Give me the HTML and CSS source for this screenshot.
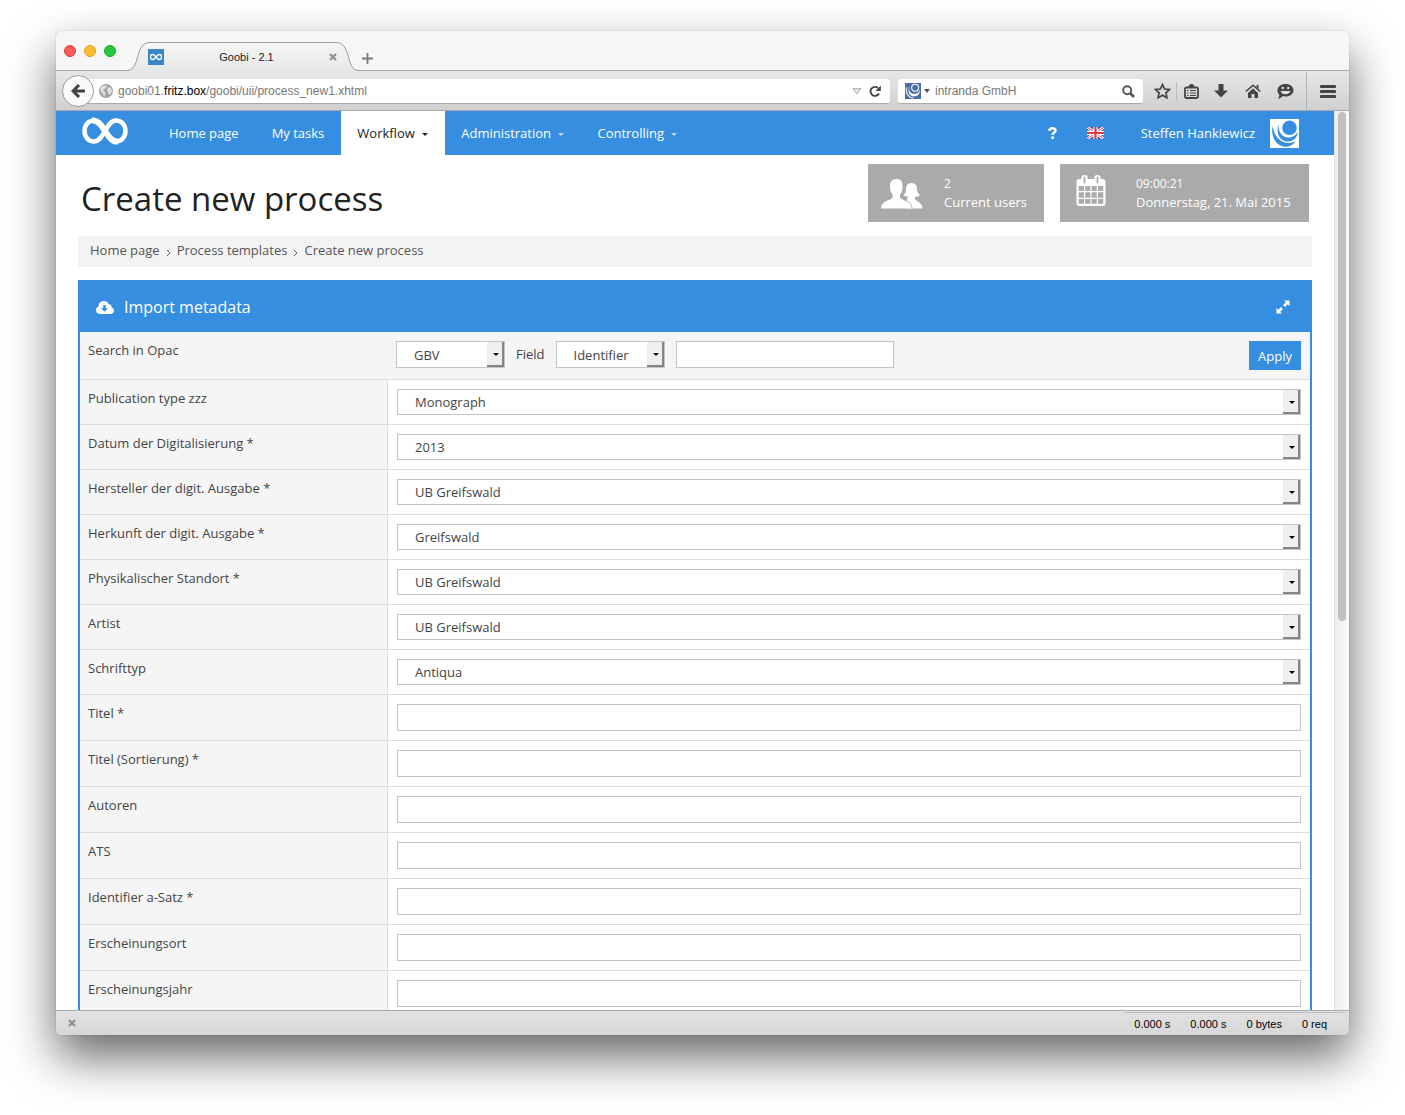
FILE: index.html
```
<!doctype html>
<html lang="en">
<head>
  <meta charset="UTF-8">
  <meta name="viewport" content="width=device-width, initial-scale=1.0">
  <title>Goobi - 2.1</title>
  <link rel="stylesheet" href="styles.css">
</head>
<body>
<div class="window">

  <!-- tabs -->
  <div class="tabstrip">
    <div class="lights">
      <span class="light red"></span>
      <span class="light yellow"></span>
      <span class="light green"></span>
    </div>
    <div class="tab">
      <svg class="tab-shape" width="232" height="30" viewBox="0 0 232 30">
        <defs>
          <linearGradient id="tabfill" x1="0" y1="0" x2="0" y2="1">
            <stop offset="0" stop-color="#f6f6f6"/>
            <stop offset="1" stop-color="#e7e7e7"/>
          </linearGradient>
        </defs>
        <path d="M0 28.500C14 28.500 7 .500 23 .500H209C225 .500 218 28.500 232 28.500V30H0Z" fill="url(#tabfill)"/>
        <path d="M0 28.500C14 28.500 7 .500 23 .500H209C225 .500 218 28.500 232 28.500" fill="none" stroke="#9a9a9a"/>
      </svg>
      <svg class="favicon" width="16" height="16" viewBox="0 0 16 16">
        <rect width="16" height="16" fill="#3a87cc"/>
        <path d="M2.500 8C2.500 6.500 3.500 5.500 4.800 5.500C7.500 5.500 8.500 10.500 11.200 10.500C12.500 10.500 13.500 9.500 13.500 8C13.500 6.500 12.500 5.500 11.200 5.500C8.500 5.500 7.500 10.500 4.800 10.500C3.500 10.500 2.500 9.500 2.500 8Z" fill="none" stroke="#fff" stroke-width="1.300"/>
      </svg>
      <span class="tab-title">Goobi - 2.1</span>
      <button class="close" aria-label="Close tab">
        <svg width="8" height="8" viewBox="0 0 8 8"><path d="M1 1L7 7M7 1L1 7" stroke="#8f8f8f" stroke-width="2.200"/></svg>
      </button>
    </div>
    <button class="newtab" aria-label="New tab">
      <svg width="11" height="11" viewBox="0 0 11 11"><path d="M5.500 0V11M0 5.500H11" stroke="#7b7b7b" stroke-width="1.800"/></svg>
    </button>
  </div>

  <!-- toolbar -->
  <div class="toolbar">
    <button class="back" aria-label="Back">
      <svg width="15" height="14" viewBox="0 0 15 14"><path d="M8 1L2.200 7L8 13M3 7H14" fill="none" stroke="#444" stroke-width="3.200"/></svg>
    </button>
    <div class="urlbar">
      <svg width="14" height="14" viewBox="0 0 14 14">
        <circle cx="7" cy="7" r="7" fill="#a3a3a3"/>
        <path d="M2 3L5 1.500L8 2L7 4L5 5L4 7L6 8L6.500 10L5 12.500L3.500 9L1.500 7ZM9.500 3L12 4L13 7L11.500 10L10 11L9 8L8 6Z" fill="#e3e3e3"/>
      </svg>
      <span class="url">goobi01.<b>fritz.box</b>/goobi/uii/process_new1.xhtml</span>
      <svg width="10" height="7" viewBox="0 0 10 7"><path d="M1 .700H9L5 6Z" fill="#e8e8e8" stroke="#a9a9a9"/></svg>
      <button class="reload" aria-label="Reload">
        <svg width="12" height="12" viewBox="0 0 12 12"><path d="M10 8.500A4.500 4.500 0 1 1 9 3" fill="none" stroke="#444" stroke-width="1.900"/><path d="M11.800 .500V6H6.500Z" fill="#444"/></svg>
      </button>
    </div>
    <div class="searchbar">
      <svg width="16" height="16" viewBox="0 0 30 30">
        <rect width="30" height="30" fill="#4a6fa5"/>
        <circle cx="19" cy="9" r="6.500" fill="none" stroke="#fff" stroke-width="2"/>
        <path d="M9 4C5 14 11 22 20 20C24 19 27 16 28 12C28 22 22 25 17 25C7 25 4 13 9 4Z" fill="#fff"/>
        <path d="M3 8C0 20 8 28 16 28" fill="none" stroke="#fff" stroke-width="2"/>
      </svg>
      <svg width="6" height="4" viewBox="0 0 6 4"><path d="M0 0H6L3 4Z" fill="#555"/></svg>
      <input type="text" placeholder="intranda GmbH" aria-label="Search">
      <svg width="13" height="13" viewBox="0 0 13 13"><circle cx="5.200" cy="5.200" r="4" fill="none" stroke="#555" stroke-width="1.900"/><path d="M8 8L12 12" stroke="#555" stroke-width="2.600"/></svg>
    </div>
    <div class="tools">
      <button class="narrow" aria-label="Bookmark">
        <svg width="17" height="16" viewBox="0 0 17 16"><path d="M8.500 1.500L10.600 6L15.500 6.500L11.900 9.800L12.900 14.700L8.500 12.200L4.100 14.700L5.100 9.800L1.500 6.500L6.400 6Z" fill="none" stroke="#444" stroke-width="1.700"/></svg>
      </button>
      <span class="sep short"></span>
      <button class="narrow" aria-label="Bookmarks menu">
        <svg width="15" height="15" viewBox="0 0 15 15"><rect x="1" y="3.500" width="13" height="10.500" rx="1.500" fill="none" stroke="#444" stroke-width="1.800"/><path d="M4.500 3.500C4.500 1 6 0 7.500 0S10.500 1 10.500 3.500Z" fill="#444"/><path d="M3 6.500H4.500M6 6.500H12M3 9H4.500M6 9H12M3 11.500H4.500M6 11.500H12" stroke="#444" stroke-width="1.200"/></svg>
      </button>
      <button aria-label="Downloads">
        <svg width="14" height="14" viewBox="0 0 14 14"><path d="M4.500 0H9.500V6.500H14L7 13.500L0 6.500H4.500Z" fill="#444"/></svg>
      </button>
      <button aria-label="Home">
        <svg width="16" height="14" viewBox="0 0 16 14"><path d="M.800 7.500L8 1.200L15.200 7.500" fill="none" stroke="#444" stroke-width="1.600"/><path d="M11.500 1H13.500V5L11.500 3.500ZM3 9L8 4.500L13 9V14H9.500V10H6.500V14H3Z" fill="#444"/></svg>
      </button>
      <button aria-label="Chat">
        <svg width="17" height="15" viewBox="0 0 17 15"><path d="M8.500 0C13 0 16.500 2.600 16.500 6.200S13 12.500 8.500 12.500C7.500 12.500 6.500 12.300 5.700 12C4.500 13.500 3 14.500 1 14.700C2 13.500 2.300 12 2.200 10.500C1 9.500 .500 8 .500 6.200C.500 2.600 4 0 8.500 0Z" fill="#444"/><circle cx="5.800" cy="4" r="1.200" fill="#ddd"/><circle cx="11.200" cy="4" r="1.200" fill="#ddd"/><path d="M3.500 7H13.500C12.500 9.300 11 10.200 8.500 10.200S4.500 9.300 3.500 7Z" fill="#ddd"/></svg>
      </button>
      <span class="sep"></span>
      <button aria-label="Menu">
        <svg width="16" height="13" viewBox="0 0 16 13"><path d="M1 1.500H15M1 6.500H15M1 11.500H15" stroke="#444" stroke-width="2.800" stroke-linecap="round"/></svg>
      </button>
    </div>
  </div>

  <!-- page -->
  <div class="viewport">
    <div class="page">
      <nav class="navbar">
        <a class="brand" href="#" aria-label="Goobi">
          <svg width="48" height="28" viewBox="0 0 48 28"><path d="M3.500 14C3.500 8 7.500 3.500 13 3.500C23 3.500 25 24.500 35 24.500C40.500 24.500 44.500 20 44.500 14C44.500 8 40.500 3.500 35 3.500C25 3.500 23 24.500 13 24.500C7.500 24.500 3.500 20 3.500 14Z" fill="none" stroke="#fff" stroke-width="4.500"/><path d="M11 3.500C23 2.500 25 25.500 37 24.500" fill="none" stroke="#fff" stroke-width="6"/></svg>
        </a>
        <a class="item" href="#">Home page</a>
        <a class="item" href="#">My tasks</a>
        <a class="item active" href="#">Workflow <span class="caret"></span></a>
        <a class="item" href="#">Administration <span class="caret"></span></a>
        <a class="item" href="#">Controlling <span class="caret"></span></a>
        <div class="nav-right">
          <a class="help" href="#" aria-label="Help">
            <svg width="9" height="12" viewBox="0 0 9 12"><path d="M1.200 3.800C1.400 2 2.600 1.200 4.400 1.200C6.400 1.200 7.600 2.200 7.600 3.600C7.600 5.600 4.600 5.600 4.600 8" fill="none" stroke="#fff" stroke-width="2.400"/><rect x="3.300" y="9.400" width="2.600" height="2.600" fill="#fff"/></svg>
          </a>
          <a class="lang" href="#" aria-label="English">
            <svg width="17" height="12" viewBox="0 0 17 12">
              <rect width="17" height="12" fill="#2f4a9c"/>
              <path d="M0 0L17 12M17 0L0 12" stroke="#fff" stroke-width="3"/>
              <path d="M0 0L17 12M17 0L0 12" stroke="#d8414f" stroke-width="1"/>
              <path d="M8.500 0V12M0 6H17" stroke="#fff" stroke-width="4.500"/>
              <path d="M8.500 0V12M0 6H17" stroke="#e03a48" stroke-width="2.200"/>
            </svg>
          </a>
          <a class="user" href="#">Steffen Hankiewicz</a>
          <svg width="29" height="29" viewBox="0 0 29 29">
            <rect width="29" height="29" fill="#fff"/>
            <circle cx="19.500" cy="8.800" r="7.300" fill="#368ee0"/>
            <path d="M9 5C7.500 12.500 12 18.500 18.500 18.500C23 18.500 26.500 16 27.800 12C28 19 22.500 23 17 22.500C9 22 5.500 12.500 9 5Z" fill="#368ee0"/>
            <path d="M2.500 7C.500 17 6 27 14.500 27.800C19 28 23.500 26 25.500 22C18 26.500 5.500 24 2.500 7Z" fill="#368ee0"/>
          </svg>
        </div>
      </nav>

      <header class="page-header">
        <h1>Create new process</h1>
        <div class="stat">
          <svg width="42" height="30" viewBox="0 0 42 30">
            <path d="M30.500 4C34.500 4 36 7 36 10C36 13 37 14.500 39 16C37.500 17.500 36 17.700 34 17.800V20.500C36.500 23 41.500 23.500 41.500 29.500H26V20.500L27 17.800C25 17.700 23.500 17 22.500 16C24.500 14.500 25 13 25 10C25 7 26.500 4 30.500 4Z" fill="#fff"/>
            <path d="M15.500 0C20 0 22 3 21.500 8C21.500 12 20 14 19 15.500V19C23 21.500 31 22.500 31 29.500H0C0 22.500 8 21.500 11.500 19V15.500C10.500 14 9 12 9 8C8.500 3 11 0 15.500 0Z" fill="#fff"/>
            <path d="M22 20.500C26 22 31 23.500 31 29.500" fill="none" stroke="#aaa" stroke-width=".900"/>
          </svg>
          <div class="stat-text">
            <span>2</span>
            <span class="desc">Current users</span>
          </div>
        </div>
        <div class="stat date">
          <svg width="30" height="32" viewBox="0 0 30 32">
            <path d="M3.500 4H26.500Q29.500 4 29.500 7V28Q29.500 31 26.500 31H3.500Q.500 31 .500 28V7Q.500 4 3.500 4Z" fill="#fff"/>
            <path d="M2.700 11H8V16H2.700ZM9.200 11H14.400V16H9.200ZM15.600 11H20.800V16H15.600ZM22 11H27.300V16H22ZM2.700 17.300H8V22.700H2.700ZM9.200 17.300H14.400V22.700H9.200ZM15.600 17.300H20.800V22.700H15.600ZM22 17.300H27.300V22.700H22ZM2.700 24H8V28.800H2.700ZM9.200 24H14.400V28.800H9.200ZM15.600 24H20.800V28.800H15.600ZM22 24H27.300V28.800H22Z" fill="#aaa"/>
            <path d="M8.500 3.200V6.800M21.500 3.200V6.800" stroke="#fff" stroke-width="6.400" stroke-linecap="round"/>
            <path d="M8.500 2.500V7.500M21.500 2.500V7.500" stroke="#aaa" stroke-width="1.800" stroke-linecap="round"/>
          </svg>
          <div class="stat-text">
            <span>09:00:21</span>
            <span class="desc">Donnerstag, 21. Mai 2015</span>
          </div>
        </div>
      </header>

      <div class="breadcrumbs">
        <a href="#">Home page</a>
        <svg width="5" height="8" viewBox="0 0 5 8"><path d="M1 1L4 4L1 7" fill="none" stroke="#666"/></svg>
        <a href="#">Process templates</a>
        <svg width="5" height="8" viewBox="0 0 5 8"><path d="M1 1L4 4L1 7" fill="none" stroke="#666"/></svg>
        <a href="#">Create new process</a>
      </div>

      <section class="box">
        <div class="box-title">
          <svg width="18" height="13" viewBox="0 0 18 13"><path d="M4 13C1.700 13 0 11.400 0 9.200C0 7.500 1 6.200 2.500 5.600C2.400 2.500 4.700 0 7.800 0C10 0 11.800 1.200 12.600 3.200C14.500 2.800 16 4.400 15.400 6.200C17 6.600 18 7.900 18 9.500C18 11.500 16.500 13 14.500 13Z" fill="#fff"/><path d="M7.300 4H9.700V7H12L8.500 10.800L5 7H7.300Z" fill="#368ee0"/></svg>
          <h3>Import metadata</h3>
          <button class="expand" aria-label="Expand">
            <svg width="14" height="14" viewBox="0 0 14 14"><path d="M8 .500H13.500V6L11.700 4.200L9 6.900L7.100 5L9.800 2.300ZM.500 8L2.300 9.800L5 7.100L6.900 9L4.200 11.700L6 13.500H.500Z" fill="#fff"/></svg>
          </button>
        </div>
        <table class="form">
          <tr class="search">
            <th><label for="catalogue">Search in Opac</label></th>
            <td>
              <div class="opac">
                <span class="select"><select id="catalogue"><option>GBV</option></select></span>
                <label for="field">Field</label>
                <span class="select"><select id="field"><option>Identifier</option></select></span>
                <input type="text" aria-label="Search term">
                <button class="apply">Apply</button>
              </div>
            </td>
          </tr>
          <tr>
            <th><label for="f1">Publication type zzz</label></th>
            <td><span class="select"><select id="f1"><option>Monograph</option></select></span></td>
          </tr>
          <tr>
            <th><label for="f2">Datum der Digitalisierung *</label></th>
            <td><span class="select"><select id="f2"><option>2013</option></select></span></td>
          </tr>
          <tr>
            <th><label for="f3">Hersteller der digit. Ausgabe *</label></th>
            <td><span class="select"><select id="f3"><option>UB Greifswald</option></select></span></td>
          </tr>
          <tr>
            <th><label for="f4">Herkunft der digit. Ausgabe *</label></th>
            <td><span class="select"><select id="f4"><option>Greifswald</option></select></span></td>
          </tr>
          <tr>
            <th><label for="f5">Physikalischer Standort *</label></th>
            <td><span class="select"><select id="f5"><option>UB Greifswald</option></select></span></td>
          </tr>
          <tr>
            <th><label for="f6">Artist</label></th>
            <td><span class="select"><select id="f6"><option>UB Greifswald</option></select></span></td>
          </tr>
          <tr>
            <th><label for="f7">Schrifttyp</label></th>
            <td><span class="select"><select id="f7"><option>Antiqua</option></select></span></td>
          </tr>
          <tr>
            <th><label for="f8">Titel *</label></th>
            <td><input type="text" id="f8"></td>
          </tr>
          <tr>
            <th><label for="f9">Titel (Sortierung) *</label></th>
            <td><input type="text" id="f9"></td>
          </tr>
          <tr>
            <th><label for="f10">Autoren</label></th>
            <td><input type="text" id="f10"></td>
          </tr>
          <tr>
            <th><label for="f11">ATS</label></th>
            <td><input type="text" id="f11"></td>
          </tr>
          <tr>
            <th><label for="f12">Identifier a-Satz *</label></th>
            <td><input type="text" id="f12"></td>
          </tr>
          <tr>
            <th><label for="f13">Erscheinungsort</label></th>
            <td><input type="text" id="f13"></td>
          </tr>
          <tr>
            <th><label for="f14">Erscheinungsjahr</label></th>
            <td><input type="text" id="f14"></td>
          </tr>
        </table>
      </section>
    </div>
    <div class="scrollbar"><div class="thumb"></div></div>
  </div>

  <!-- status bar -->
  <div class="statusbar">
    <button class="close" aria-label="Close add-on bar">
      <svg width="8" height="8" viewBox="0 0 8 8"><path d="M1 1L7 7M7 1L1 7" stroke="#8f8f8f" stroke-width="2.200"/></svg>
    </button>
    <div class="timings">
      <span>0.000 s</span>
      <span>0.000 s</span>
      <span>0 bytes</span>
      <span>0 req</span>
    </div>
  </div>
</div>
</body>
</html>
```

FILE: styles.css
```
* {
    box-sizing: border-box;
}
body {
    margin: 0;
    padding: 31px 56px 80px;
    height: 100vh;
    background: #fff;
    font-family: "Open Sans", sans-serif;
    font-size: 13px;
    line-height: 20px;
    color: #444;
    overflow: hidden;
}
a {
    color: inherit;
    text-decoration: none;
}
button {
    display: flex;
    align-items: center;
    justify-content: center;
    padding: 0;
    border: 0;
    background: none;
    font-family: inherit;
    cursor: pointer;
}
svg {
    display: block;
    flex: none;
}

/* browser window */
.window {
    display: flex;
    flex-direction: column;
    height: 100%;
    border-radius: 5px;
    overflow: hidden;
    background: #fff;
    box-shadow: 0 0 1px rgba(0, 0, 0, 0.5), 0 22px 48px rgba(0, 0, 0, 0.6);
}
.tabstrip {
    display: flex;
    flex: none;
    height: 40px;
    background: #f6f6f6;
    border-bottom: 1px solid #a9a9a9;
    font-family: "Liberation Sans", sans-serif;
    font-size: 11px;
    color: #222;
}
.lights {
    display: flex;
    gap: 8px;
    padding: 14px 11px 0 8px;
}
.light {
    width: 12px;
    height: 12px;
    border-radius: 50%;
}
.red {
    background: #fc5b57;
    border: 1px solid #df3d38;
}
.yellow {
    background: #fdbd2f;
    border: 1px solid #de9f27;
}
.green {
    background: #27c83f;
    border: 1px solid #18aa29;
}
.tab {
    position: relative;
    display: flex;
    align-items: center;
    width: 232px;
    height: 30px;
    margin-top: 11px;
    padding: 0 22px 0 21px;
}
.tab-shape {
    position: absolute;
    top: 0;
    left: 0;
}
.favicon,
.tab-title,
.tab .close {
    position: relative;
}
.tab-title {
    flex: 1;
    text-align: center;
}
.newtab {
    width: 16px;
    height: 20px;
    margin-top: 17px;
}
.toolbar {
    display: flex;
    flex: none;
    align-items: center;
    height: 40px;
    padding: 1px 5px 0 6px;
    background: linear-gradient(#e7e7e7, #d0d0d0);
    border-bottom: 1px solid #a9a9a9;
    font-family: "Liberation Sans", sans-serif;
    font-size: 12px;
}
.back {
    z-index: 1;
    width: 32px;
    height: 32px;
    border: 1px solid #9c9c9c;
    border-radius: 50%;
    background: #fafafa;
}
.urlbar {
    display: flex;
    flex: 1;
    align-items: center;
    gap: 5px;
    height: 25px;
    margin: 0 8px 0 -7px;
    padding: 1px 7px 0 12px;
    background: #fff;
    border-bottom: 1px solid #aaa;
    border-radius: 0 3px 3px 0;
}
.url {
    flex: 1;
    color: #777;
}
.url b {
    font-weight: normal;
    color: #000;
}
.reload {
    width: 16px;
    height: 16px;
}
.searchbar {
    display: flex;
    align-items: center;
    gap: 3px;
    width: 245px;
    height: 25px;
    padding: 1px 8px 0 7px;
    background: #fff;
    border-bottom: 1px solid #aaa;
    border-radius: 3px;
}
.searchbar input {
    flex: 1;
    min-width: 0;
    padding: 0 2px;
    border: 0;
    outline: 0;
    font: inherit;
}
.searchbar input::placeholder {
    color: #777;
}
.tools {
    display: flex;
    align-items: center;
    padding-left: 5px;
}
.tools button {
    width: 32px;
    height: 28px;
}
.tools .narrow {
    width: 28px;
}
.sep {
    width: 1px;
    height: 38px;
    margin: 0 5px;
    background: #aab4bd;
}
.sep.short {
    height: 18px;
    margin: 0;
    background: #bbb;
}

/* page */
.viewport {
    display: flex;
    flex: 1;
    min-height: 0;
}
.page {
    flex: 1;
    min-width: 0;
    overflow: hidden;
}
.scrollbar {
    width: 15px;
    padding: 1px 3px 0 3px;
    background: linear-gradient(90deg, #ededed, #fafafa);
    border-left: 1px solid #e0e0e0;
}
.thumb {
    height: 509px;
    max-height: 57%;
    border-radius: 4px;
    background: #c1c1c1;
}
.navbar {
    display: flex;
    height: 44px;
    background: #368ee0;
    color: #fff;
}
.brand {
    padding: 6px 24px 0 25px;
}
.item {
    padding: 12px 17px 12px 16px;
}
.item.active {
    background: #fff;
    color: #222;
}
.caret {
    display: inline-block;
    margin-left: 4px;
    border-top: 3px solid #c4d4e4;
    border-left: 3px solid transparent;
    border-right: 3px solid transparent;
    vertical-align: middle;
}
.active .caret {
    border-top-color: #222;
}
.nav-right {
    display: flex;
    align-items: center;
    margin-left: auto;
    padding-right: 35px;
}
.lang {
    margin: 0 37px 0 30px;
}
.user {
    margin-right: 15px;
}
.page-header {
    display: flex;
    gap: 16px;
    padding: 9px 25px 14px;
}
h1 {
    flex: 1;
    margin: 0;
    padding-top: 12px;
    font-size: 33px;
    line-height: 46px;
    font-weight: normal;
    color: #222;
}
.stat {
    display: flex;
    gap: 21px;
    min-width: 176px;
    height: 58px;
    padding: 0 16px 0 13px;
    background: #aaa;
    color: #fff;
}
.stat svg {
    margin-top: 15px;
}
.stat.date {
    gap: 30px;
    min-width: 249px;
    padding-left: 16px;
}
.stat.date svg {
    margin-top: 11px;
}
.stat-text {
    display: flex;
    flex-direction: column;
    padding-top: 10px;
    font-size: 12px;
    line-height: 19px;
}
.desc {
    font-size: 13px;
}
.breadcrumbs {
    display: flex;
    align-items: center;
    gap: 6px;
    height: 31px;
    margin: 0 22px 13px;
    padding: 0 12px 3px;
    background: #f3f3f3;
    color: #555;
}
.breadcrumbs svg {
    margin-top: 6px;
}
.box {
    margin: 0 22px;
    border: 2px solid #368ee0;
    border-top: 0;
}
.box-title {
    display: flex;
    align-items: center;
    height: 52px;
    padding: 2px 20px 0 16px;
    background: #368ee0;
    color: #fff;
}
.box-title h3 {
    flex: 1;
    margin: 0 0 0 10px;
    font-size: 16px;
    font-weight: normal;
}

/* form */
.form {
    width: 100%;
    border-collapse: separate;
    border-spacing: 0;
}
.form th {
    width: 307px;
    padding: 8px 8px 0;
    border-bottom: 1px solid #ddd;
    background: #f5f5f5;
    font-weight: normal;
    text-align: left;
    vertical-align: top;
}
.form td {
    padding: 9px;
    border-left: 1px solid #ddd;
    border-bottom: 1px solid #ddd;
}
.form .search td {
    border-left: 0;
    background: #f5f5f5;
}
.form input,
.form select {
    display: block;
    width: 100%;
    height: 27px;
    padding: 0 8px;
    border: 1px solid #c4c4c4;
    border-radius: 0;
    background: #fff;
    color: #444;
    font-family: inherit;
    font-size: 13px;
}
.form select {
    height: 26px;
    padding: 0 17px;
    appearance: none;
}
.select {
    position: relative;
    display: block;
}
/* raised button at the right of a drop-down */
.select::before {
    content: "";
    position: absolute;
    top: 1px;
    right: 1px;
    bottom: 1px;
    width: 15px;
    border-right: 2px solid #858585;
    border-bottom: 2px solid #858585;
    background: #efefef;
    pointer-events: none;
}
.select::after {
    content: "";
    position: absolute;
    top: 12px;
    right: 6px;
    border-top: 3px solid #000;
    border-left: 3px solid transparent;
    border-right: 3px solid transparent;
    pointer-events: none;
}
.opac {
    display: flex;
    align-items: flex-start;
    gap: 11px;
}
.opac label {
    padding-top: 3px;
}
.opac .select {
    width: 109px;
}
.opac .select select {
    height: 27px;
}
.opac input {
    width: 218px;
}
.apply {
    height: 29px;
    margin-left: auto;
    padding: 0 9px;
    background: #368ee0;
    color: #fff;
    font-size: 13px;
}

/* status bar */
.statusbar {
    display: flex;
    flex: none;
    justify-content: space-between;
    height: 25px;
    padding: 0 4px 0 12px;
    border-top: 1px solid #aaa;
    background: linear-gradient(#e2e2e2, #d6d6d6);
    font-family: "Liberation Sans", sans-serif;
    font-size: 11px;
    color: #000;
}
.timings {
    display: flex;
    gap: 20px;
    margin-top: 1px;
    padding: 1px 18px 0 10px;
    border-top: 1px solid #bbb;
}
```
